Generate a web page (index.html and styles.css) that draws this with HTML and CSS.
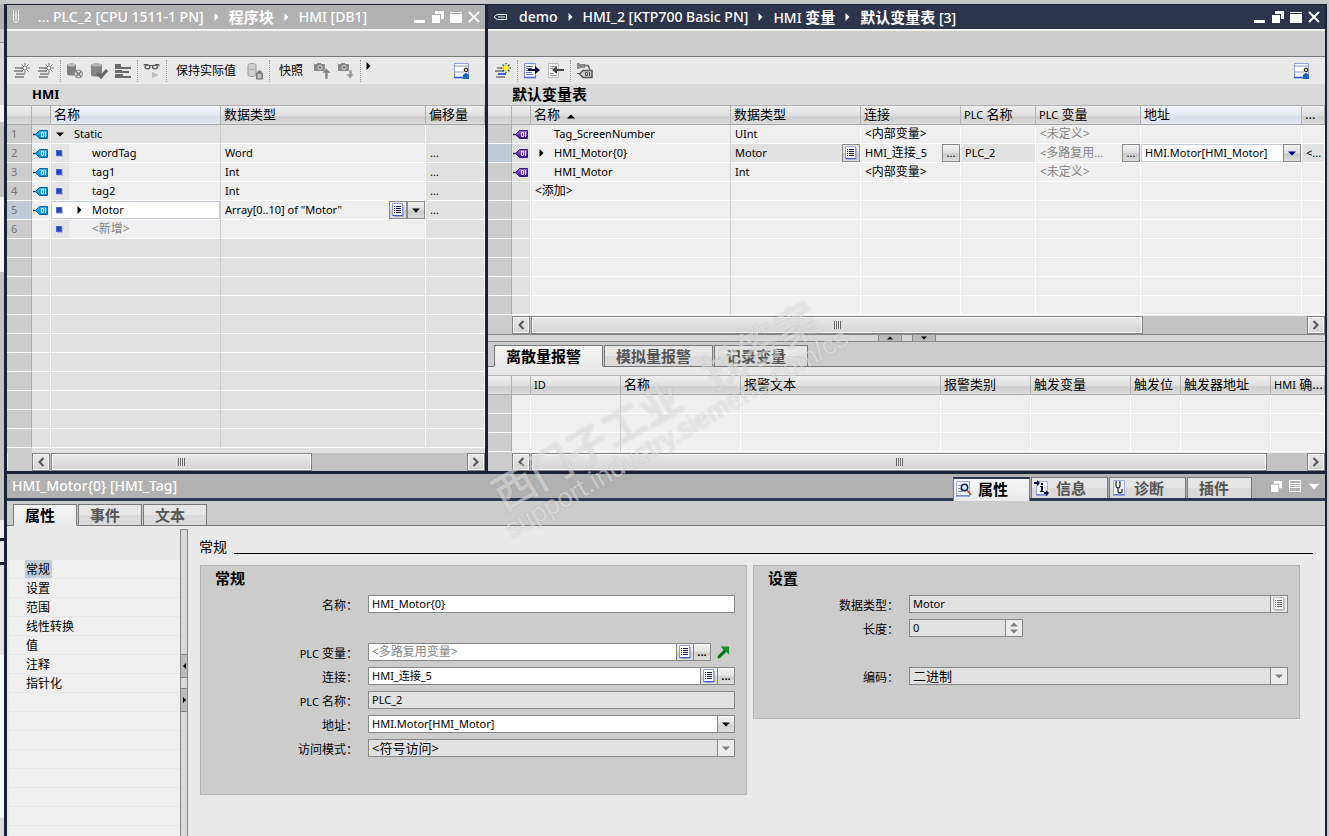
FILE: index.html
```html
<!DOCTYPE html>
<html lang="zh-CN">
<head>
    <meta charset="UTF-8">
    <meta name="viewport" content="width=device-width, initial-scale=1.0">
    <title>HMI_Motor{0} [HMI_Tag]</title>
    <link rel="stylesheet" href="styles.css">
</head>
<body>
    <!-- Icon library -->
    <svg class="icon-defs" aria-hidden="true">
        <linearGradient id="tagBlue" x1="0" y1="0" x2="0" y2="1"><stop offset="0" stop-color="#2bb4ff"/><stop offset="1" stop-color="#008ce0"/></linearGradient>
        <linearGradient id="tagViolet" x1="0" y1="0" x2="0" y2="1"><stop offset="0" stop-color="#9a68e6"/><stop offset="1" stop-color="#3b0a9a"/></linearGradient>
        <symbol id="tag-blue" viewBox="0 0 16 11">
            <path d="M0 5.5h3" stroke="#123" stroke-width="1.4"/>
            <path d="M2.500 5.500L6.500 1.500H14.500v8H6.500z" fill="url(#tagBlue)" stroke="#0a5f9e"/>
            <path d="M8.500 3.500h2v4h-2zM12.500 3v5" fill="none" stroke="#fff"/>
        </symbol>
        <symbol id="tag-violet" viewBox="0 0 16 11">
            <path d="M0 5.5h3" stroke="#123" stroke-width="1.4"/>
            <path d="M2.500 5.500L6.500 1.500H14.500v8H6.500z" fill="url(#tagViolet)" stroke="#3a1488"/>
            <path d="M8.500 3.500h2v4h-2zM12.500 3v5" fill="none" stroke="#fff"/>
        </symbol>
        <symbol id="list" viewBox="0 0 12 14">
            <path d="M2 2h10v12H2z" fill="#a9b1cf"/>
            <path d="M.5.5h10v12H.5z" fill="#fff" stroke="#8c9ce0"/>
            <path d="M.5 12.500h10" stroke="#3b5bd0"/>
            <path d="M2 3.500h1m1 0h5M2 5.500h1m1 0h5M2 7.500h1m1 0h5M2 9.500h1m1 0h5" stroke="#101050"/>
        </symbol>
        <symbol id="list-gray" viewBox="0 0 12 14">
            <path d="M2 2h10v12H2z" fill="#bfc4cf"/>
            <path d="M.5.5h10v12H.5z" fill="#f2f2f2" stroke="#bbb"/>
            <path d="M2 3.500h1m1 0h5M2 5.500h1m1 0h5M2 7.500h1m1 0h5M2 9.500h1m1 0h5" stroke="#666"/>
        </symbol>
        <symbol id="down" viewBox="0 0 8 5"><path d="M0 .5h8L4 4.500z" fill="currentColor"/></symbol>
        <symbol id="up" viewBox="0 0 8 5"><path d="M0 4.500h8L4 .5z" fill="currentColor"/></symbol>
        <symbol id="right" viewBox="0 0 5 8"><path d="M.5 0v8l4-4z" fill="currentColor"/></symbol>
        <symbol id="left" viewBox="0 0 5 8"><path d="M4.500 0v8l-4-4z" fill="currentColor"/></symbol>
        <symbol id="chev-left" viewBox="0 0 8 10"><path d="M6.500 1L2.500 5l4 4" fill="none" stroke="#555" stroke-width="2"/></symbol>
        <symbol id="chev-right" viewBox="0 0 8 10"><path d="M1.500 1l4 4-4 4" fill="none" stroke="#555" stroke-width="2"/></symbol>
        <symbol id="win-min" viewBox="0 0 12 12"><path d="M0 9h11v3H0z" fill="#fff"/></symbol>
        <symbol id="win-restore" viewBox="0 0 12 12"><path d="M0 4h8v8H0zM3 0h9v8H9V3H3z" fill="#fff"/></symbol>
        <symbol id="win-max" viewBox="0 0 12 12"><path d="M0 1h12v1H0zM0 3h12v9H0z" fill="#fff"/></symbol>
        <symbol id="win-close" viewBox="0 0 12 12"><path d="M1 1l10 10M11 1L1 11" stroke="#fff" stroke-width="2"/></symbol>
        <symbol id="new-row" viewBox="0 0 18 18">
            <path d="M2 5h8v2H2zM1 8h9v2H1zM3 11h9v2H3zM2 14h9v2H2z" fill="#999"/>
            <path d="M12 1v10M7 6h10M8.500 2.500l7 7M15.500 2.500l-7 7" stroke="#777"/>
            <path d="M11 5h2v2h-2z" fill="#fff"/>
        </symbol>
        <symbol id="new-row-color" viewBox="0 0 18 18">
            <path d="M3 5h7v2H3zM1 8h9v2H1zM2 14h9v2H2z" fill="#909090"/>
            <path d="M4 11h8v2H4z" fill="#3d62e8"/>
            <path d="M12 1v10M7 6h10M8.500 2.500l7 7M15.500 2.500l-7 7" stroke="#2d5f6e" stroke-width="1.300"/>
            <path d="M12 2v8M8 6h8M10 4l4 4M14 4l-4 4" stroke="#ffef3a" stroke-width="1.500"/>
        </symbol>
        <symbol id="cylinder-gear" viewBox="0 0 18 18">
            <path d="M1 3c0-2 9-2 9 0v9c0 2-9 2-9 0z" fill="#808080"/>
            <ellipse cx="5.500" cy="3" rx="4" ry="1.500" fill="#bcbcbc"/>
            <circle cx="12.500" cy="12" r="4" fill="#ddd" stroke="#888"/>
            <path d="M10 9.500l5 5M15 9.500l-5 5" stroke="#777" stroke-width="1.500"/>
        </symbol>
        <symbol id="cylinder-check" viewBox="0 0 18 18">
            <path d="M1 3c0-2 11-2 11 0v10c0 2-11 2-11 0z" fill="#858585"/>
            <ellipse cx="6.500" cy="3" rx="5" ry="1.500" fill="#b8b8b8"/>
            <path d="M7 11l4 4 6-7" fill="none" stroke="#666" stroke-width="3"/>
        </symbol>
        <symbol id="cylinder-lock" viewBox="0 0 18 18">
            <path d="M2 3c0-2 8-2 8 0v10c0 2-8 2-8 0z" fill="#cfcfcf" stroke="#999"/>
            <path d="M2 6c0 2 8 2 8 0" fill="none" stroke="#aaa"/>
            <path d="M10.500 11h6v6h-6zM12 11V9h3v2" fill="#999" stroke="#777"/>
            <path d="M12 13h3M12 15h3" stroke="#eee"/>
        </symbol>
        <symbol id="rows" viewBox="0 0 18 18">
            <path d="M1 2h6v3h10v2H1zM1 8h7v1h7v2H1zM1 12h8v2h8v2H1z" fill="#6c6c6c"/>
        </symbol>
        <symbol id="glasses" viewBox="0 0 18 18">
            <path d="M1 3.500V2.500h4M12 2.500h4v2M7 3.500h3" fill="none" stroke="#555"/>
            <ellipse cx="4.500" cy="5" rx="2.500" ry="1.800" fill="none" stroke="#555" stroke-width="1.300"/>
            <ellipse cx="12" cy="5" rx="2.500" ry="1.800" fill="none" stroke="#555" stroke-width="1.300"/>
            <path d="M9 10v6l7-3z" fill="#bbb"/>
        </symbol>
        <symbol id="camera-up" viewBox="0 0 18 18">
            <path d="M1 2h3V1h4v1h4v7H1z" fill="#8a8a8a"/><circle cx="7" cy="5.500" r="2" fill="#777" stroke="#ddd"/>
            <path d="M13 6l5 5h-3v6h-3v-6H9z" fill="#888" stroke="#e9e9e9" stroke-width=".5"/>
        </symbol>
        <symbol id="camera-down" viewBox="0 0 18 18">
            <path d="M1 2h3V1h4v1h4v7H1z" fill="#8a8a8a"/><circle cx="7" cy="5.500" r="2" fill="#777" stroke="#ddd"/>
            <path d="M13 17l4-5h-2V8h-3v4H9z" fill="#999" stroke="#e9e9e9" stroke-width=".5"/>
        </symbol>
        <symbol id="sheet-user" viewBox="0 0 18 18">
            <path d="M1.500 1.500h14v14h-14z" fill="#fff" stroke="#94a2dc"/>
            <path d="M1 4h15M1 10h10" stroke="#8d9bb8"/>
            <path d="M1 15.500h12" stroke="#2b50e0" stroke-width="1.500"/>
            <circle cx="13" cy="8" r="1.800" fill="#f0c69a" stroke="#111"/>
            <path d="M10 17v-4q3-4 6 0v4z" fill="#1d66b5"/>
        </symbol>
        <symbol id="export" viewBox="0 0 18 18">
            <path d="M1.500 1.500h11v14h-11z" fill="#fff" stroke="#7a8ce0"/>
            <path d="M1 15.500h12" stroke="#4262d8" stroke-width="1.500"/>
            <path d="M3 4.500h7M3 6.500h6M3 8.500h2M3 10.500h6M3 12.500h7" stroke="#6274b4"/>
            <path d="M5 7h7V4l5 4-5 4V9H5z" fill="#060640"/>
        </symbol>
        <symbol id="import" viewBox="0 0 18 18">
            <path d="M1.500 1.500h10v14h-10z" fill="#f6f6f6" stroke="#bbb"/>
            <path d="M3 4.500h7M3 6.500h3M3 11.500h4M3 13.500h7" stroke="#999"/>
            <path d="M17 7h-7V4L5 8l5 4V9h7z" fill="#444"/>
        </symbol>
        <symbol id="plug" viewBox="0 0 18 18">
            <path d="M1 1h2l1 1h5v4H4L3 7H1z" fill="#8a8a8a"/>
            <path d="M8 3.500h4l2 4" fill="none" stroke="#666" stroke-width="1.500"/>
            <path d="M1 11.500h3" stroke="#555"/>
            <path d="M3.500 12L7 8.500h9v7H7z" fill="#ccc" stroke="#555" stroke-width="1.500"/>
            <path d="M9.500 10.500h2v3h-2zM13.500 10v4" fill="none" stroke="#555"/>
        </symbol>
        <symbol id="goto" viewBox="0 0 14 14">
            <path d="M4 1h9v9l-3-3-7 7H1v-3l6-6z" fill="#17932c"/>
            <path d="M1 13l8-8" stroke="#0b5c1a" stroke-width="2"/>
        </symbol>
        <symbol id="search-sheet" viewBox="0 0 16 16">
            <path d="M.5.5h13v14H.5z" fill="#f7f9ff" stroke="#a0aee8"/><path d="M0 15h14" stroke="#4a68dc"/>
            <path d="M2 4.500h4M2 7.500h3M2 10.500h5" stroke="#99a"/>
            <circle cx="8.500" cy="6.500" r="3.200" fill="#dce8fb" stroke="#102050" stroke-width="1.500"/><path d="M11 9l4 5" stroke="#98673b" stroke-width="2"/>
        </symbol>
        <symbol id="info-sheet" viewBox="0 0 16 16">
            <path d="M2.500 1.500h11v13h-11z" fill="#eef2ff" stroke="#a0aee8"/><path d="M2 15h12" stroke="#4a68dc"/>
            <path d="M0 2h3V0l3 3-3 3V4H0zM10 12h2v-2l3 3-3 3v-2h-2z" fill="#060640"/>
            <path d="M7 3h2v2H7zM6 6h3v5h1v1H6v-1h1V7H6z" fill="#060640"/>
        </symbol>
        <symbol id="diag-sheet" viewBox="0 0 16 16">
            <path d="M1.500.5h11v14h-11z" fill="#eef2ff" stroke="#a0aee8"/><path d="M1 15h12" stroke="#4a68dc"/>
            <path d="M5 2H4v3q0 3 2 3t2-3V2H7M6 8v3q0 2 2 2t2-2V9" fill="none" stroke="#333" stroke-width="1.300"/>
        </symbol>
    </svg>

    <div class="app">
        <div class="edge-top"></div>
        <div class="workspace">
            <!-- PLC data block editor -->
            <section class="window">
                <header class="titlebar">
                    <svg class="pin" width="8" height="14" viewBox="0 0 8 14"><path d="M1.500 0v10l2.500 3 2.500-3V0M4 1v9" fill="none" stroke="#fff"/></svg>
                    <div class="crumbs">
                        <span>... PLC_2 [CPU 1511-1 PN]</span><svg width="5" height="8"><use href="#right"/></svg><span class="zh">程序块</span><svg width="5" height="8"><use href="#right"/></svg><span>HMI [DB1]</span>
                    </div>
                    <div class="window-buttons">
                        <button aria-label="最小化"><svg width="12" height="12"><use href="#win-min"/></svg></button>
                        <button aria-label="浮动"><svg width="12" height="12"><use href="#win-restore"/></svg></button>
                        <button aria-label="最大化"><svg width="12" height="12"><use href="#win-max"/></svg></button>
                        <button aria-label="关闭"><svg width="12" height="12"><use href="#win-close"/></svg></button>
                    </div>
                </header>
                <div class="substrip"></div>
                <div class="toolbar">
                    <button aria-label="插入行"><svg width="18" height="18"><use href="#new-row"/></svg></button>
                    <button aria-label="添加行"><svg width="18" height="18"><use href="#new-row"/></svg></button>
                    <span class="sep"></span>
                    <button aria-label="复位启动值"><svg width="18" height="18"><use href="#cylinder-gear"/></svg></button>
                    <button aria-label="更新接口"><svg width="18" height="18"><use href="#cylinder-check"/></svg></button>
                    <button aria-label="扩展模式"><svg width="18" height="18"><use href="#rows"/></svg></button>
                    <span class="sep"></span>
                    <button aria-label="全部监视"><svg width="18" height="18"><use href="#glasses"/></svg></button>
                    <span class="sep"></span>
                    <button class="text-button">保持实际值</button>
                    <button aria-label="锁定"><svg width="18" height="18"><use href="#cylinder-lock"/></svg></button>
                    <span class="sep"></span>
                    <button class="text-button">快照</button>
                    <button aria-label="上传快照"><svg width="18" height="18"><use href="#camera-up"/></svg></button>
                    <button aria-label="下载快照"><svg width="18" height="18"><use href="#camera-down"/></svg></button>
                    <span class="sep"></span>
                    <button class="more" aria-label="更多"><svg width="5" height="8"><use href="#right"/></svg></button>
                    <button class="last" aria-label="保存窗口设置"><svg width="18" height="18"><use href="#sheet-user"/></svg></button>
                </div>
                <h2 class="table-title">HMI</h2>
                <div class="grid-wrap grid-dark">
                    <table class="grid">
                        <colgroup><col class="c-num-l"><col class="c-icon"><col class="w170"><col class="w205"><col></colgroup>
                        <thead>
                            <tr><th></th><th></th><th class="sorted">名称</th><th>数据类型</th><th>偏移量</th></tr>
                        </thead>
                        <tbody>
                            <tr class="group"><td>1</td><td><svg width="16" height="11"><use href="#tag-blue"/></svg></td><td><div class="cell"><span class="slot"><svg width="8" height="5"><use href="#down"/></svg></span>Static</div></td><td></td><td></td></tr>
                            <tr><td>2</td><td><svg width="16" height="11"><use href="#tag-blue"/></svg></td><td><div class="cell"><span class="slot tint"><i class="bullet"></i></span><span class="slot"></span>wordTag</div></td><td>Word</td><td>...</td></tr>
                            <tr><td>3</td><td><svg width="16" height="11"><use href="#tag-blue"/></svg></td><td><div class="cell"><span class="slot tint"><i class="bullet"></i></span><span class="slot"></span>tag1</div></td><td>Int</td><td>...</td></tr>
                            <tr><td>4</td><td><svg width="16" height="11"><use href="#tag-blue"/></svg></td><td><div class="cell"><span class="slot tint"><i class="bullet"></i></span><span class="slot"></span>tag2</div></td><td>Int</td><td>...</td></tr>
                            <tr><td class="current">5</td><td><svg width="16" height="11"><use href="#tag-blue"/></svg></td><td class="selected"><div class="cell"><span class="slot"><i class="bullet"></i></span><span class="slot"><svg width="5" height="8"><use href="#right"/></svg></span>Motor</div></td><td><div class="cell"><span class="value">Array[0..10] of "Motor"</span><button class="mini" aria-label="选择类型"><svg width="12" height="14"><use href="#list"/></svg></button><button class="mini" aria-label="展开"><svg width="8" height="5"><use href="#down"/></svg></button></div></td><td>...</td></tr>
                            <tr><td>6</td><td></td><td><div class="cell"><span class="slot tint"><i class="bullet"></i></span><span class="slot"></span><span class="zh hint">&lt;新增&gt;</span></div></td><td></td><td></td></tr>
                            <tr class="group"><td></td><td></td><td></td><td></td><td></td></tr>
                            <tr class="group"><td></td><td></td><td></td><td></td><td></td></tr>
                            <tr class="group"><td></td><td></td><td></td><td></td><td></td></tr>
                            <tr class="group"><td></td><td></td><td></td><td></td><td></td></tr>
                            <tr class="group"><td></td><td></td><td></td><td></td><td></td></tr>
                            <tr class="group"><td></td><td></td><td></td><td></td><td></td></tr>
                            <tr class="group"><td></td><td></td><td></td><td></td><td></td></tr>
                            <tr class="group"><td></td><td></td><td></td><td></td><td></td></tr>
                            <tr class="group"><td></td><td></td><td></td><td></td><td></td></tr>
                            <tr class="group"><td></td><td></td><td></td><td></td><td></td></tr>
                            <tr class="group"><td></td><td></td><td></td><td></td><td></td></tr>
                        </tbody>
                    </table>
                </div>
                <div class="scrollbar">
                    <button aria-label="向左"><svg width="8" height="10"><use href="#chev-left"/></svg></button>
                    <div class="track"><div class="thumb thumb-left"><i class="grip"></i></div></div>
                    <button aria-label="向右"><svg width="8" height="10"><use href="#chev-right"/></svg></button>
                </div>
            </section>

            <!-- HMI tag table -->
            <section class="window active">
                <header class="titlebar">
                    <svg class="pin" width="14" height="8" viewBox="0 0 14 8"><path d="M13.500 1.500H4L1 4l3 2.500h9.500v-5M12 4H5" fill="none" stroke="#fff"/></svg>
                    <div class="crumbs">
                        <span>demo</span><svg width="5" height="8"><use href="#right"/></svg><span>HMI_2 [KTP700 Basic PN]</span><svg width="5" height="8"><use href="#right"/></svg><span>HMI <b class="zh">变量</b></span><svg width="5" height="8"><use href="#right"/></svg><span><b class="zh">默认变量表</b> [3]</span>
                    </div>
                    <div class="window-buttons">
                        <button aria-label="最小化"><svg width="12" height="12"><use href="#win-min"/></svg></button>
                        <button aria-label="浮动"><svg width="12" height="12"><use href="#win-restore"/></svg></button>
                        <button aria-label="最大化"><svg width="12" height="12"><use href="#win-max"/></svg></button>
                        <button aria-label="关闭"><svg width="12" height="12"><use href="#win-close"/></svg></button>
                    </div>
                </header>
                <div class="substrip"></div>
                <div class="toolbar">
                    <button aria-label="添加变量"><svg width="18" height="18"><use href="#new-row-color"/></svg></button>
                    <span class="sep"></span>
                    <button aria-label="导出"><svg width="18" height="18"><use href="#export"/></svg></button>
                    <button aria-label="导入"><svg width="18" height="18"><use href="#import"/></svg></button>
                    <span class="sep"></span>
                    <button aria-label="重新连接"><svg width="18" height="18"><use href="#plug"/></svg></button>
                    <button class="last" aria-label="保存窗口设置"><svg width="18" height="18"><use href="#sheet-user"/></svg></button>
                </div>
                <h2 class="table-title zh">默认变量表</h2>
                <div class="grid-wrap">
                    <table class="grid tags">
                        <colgroup><col class="c-num"><col class="c-icon"><col class="w200"><col class="w130"><col class="w100"><col class="w75"><col class="w105"><col class="w161"><col></colgroup>
                        <thead>
                            <tr><th></th><th></th><th>名称 <svg class="sort" width="8" height="5"><use href="#up"/></svg></th><th>数据类型</th><th>连接</th><th><small>PLC</small> 名称</th><th><small>PLC</small> 变量</th><th class="sorted">地址</th><th>...</th></tr>
                        </thead>
                        <tbody>
                            <tr><td></td><td><svg width="16" height="11"><use href="#tag-violet"/></svg></td><td><div class="cell"><span class="slot"></span>Tag_ScreenNumber</div></td><td>UInt</td><td class="zh">&lt;内部变量&gt;</td><td></td><td class="zh hint">&lt;未定义&gt;</td><td></td><td></td></tr>
                            <tr><td class="current"></td><td><svg width="16" height="11"><use href="#tag-violet"/></svg></td><td><div class="cell"><span class="slot"><svg width="5" height="8"><use href="#right"/></svg></span>HMI_Motor{0}</div></td>
                                <td class="readonly"><div class="cell"><span class="value">Motor</span><button class="mini" aria-label="选择类型"><svg width="12" height="14"><use href="#list"/></svg></button></div></td>
                                <td><div class="cell"><span class="value">HMI_<span class="zh">连接</span>_5</span><button class="mini" aria-label="浏览连接">...</button></div></td>
                                <td class="readonly">PLC_2</td>
                                <td><div class="cell"><span class="value hint">&lt;<span class="zh">多路复用</span>...</span><button class="mini" aria-label="浏览变量">...</button></div></td>
                                <td class="selected"><div class="cell"><input type="text" aria-label="地址" value="HMI.Motor[HMI_Motor]"><button class="mini blue" aria-label="展开"><svg width="8" height="5"><use href="#down"/></svg></button></div></td>
                                <td class="readonly">&lt;...</td></tr>
                            <tr><td></td><td><svg width="16" height="11"><use href="#tag-violet"/></svg></td><td><div class="cell"><span class="slot"></span>HMI_Motor</div></td><td>Int</td><td class="zh">&lt;内部变量&gt;</td><td></td><td class="zh hint">&lt;未定义&gt;</td><td></td><td></td></tr>
                            <tr><td></td><td></td><td class="zh">&lt;添加&gt;</td><td></td><td></td><td></td><td></td><td></td><td></td></tr>
                            <tr><td></td><td></td><td></td><td></td><td></td><td></td><td></td><td></td><td></td></tr>
                            <tr><td></td><td></td><td></td><td></td><td></td><td></td><td></td><td></td><td></td></tr>
                            <tr><td></td><td></td><td></td><td></td><td></td><td></td><td></td><td></td><td></td></tr>
                            <tr><td></td><td></td><td></td><td></td><td></td><td></td><td></td><td></td><td></td></tr>
                            <tr><td></td><td></td><td></td><td></td><td></td><td></td><td></td><td></td><td></td></tr>
                            <tr><td></td><td></td><td></td><td></td><td></td><td></td><td></td><td></td><td></td></tr>
                        </tbody>
                    </table>
                </div>
                <div class="scrollbar">
                    <button aria-label="向左"><svg width="8" height="10"><use href="#chev-left"/></svg></button>
                    <div class="track"><div class="thumb thumb-tags"><i class="grip"></i></div></div>
                    <button aria-label="向右"><svg width="8" height="10"><use href="#chev-right"/></svg></button>
                </div>
                <div class="splitter-h">
                    <button aria-label="向上"><svg width="6" height="4"><use href="#up"/></svg></button>
                    <button aria-label="向下"><svg width="6" height="4"><use href="#down"/></svg></button>
                </div>
                <nav class="tabs">
                    <button class="tab on">离散量报警</button>
                    <button class="tab">模拟量报警</button>
                    <button class="tab">记录变量</button>
                </nav>
                <div class="grid-wrap alarms">
                    <table class="grid">
                        <colgroup><col class="c-num"><col class="c-icon"><col class="w90"><col class="w120"><col class="w200"><col class="w90"><col class="w100"><col class="w50"><col class="w90"><col></colgroup>
                        <thead>
                            <tr><th></th><th></th><th><small>ID</small></th><th>名称</th><th>报警文本</th><th>报警类别</th><th>触发变量</th><th>触发位</th><th>触发器地址</th><th><small>HMI</small> 确...</th></tr>
                        </thead>
                        <tbody>
                            <tr><td></td><td></td><td></td><td></td><td></td><td></td><td></td><td></td><td></td><td></td></tr>
                            <tr><td></td><td></td><td></td><td></td><td></td><td></td><td></td><td></td><td></td><td></td></tr>
                            <tr><td></td><td></td><td></td><td></td><td></td><td></td><td></td><td></td><td></td><td></td></tr>
                        </tbody>
                    </table>
                </div>
                <div class="scrollbar">
                    <button aria-label="向左"><svg width="8" height="10"><use href="#chev-left"/></svg></button>
                    <div class="track"><div class="thumb thumb-alarms"><i class="grip"></i></div></div>
                    <button aria-label="向右"><svg width="8" height="10"><use href="#chev-right"/></svg></button>
                </div>
            </section>
        </div>

        <!-- Inspector -->
        <section class="inspector">
            <header class="inspector-bar">
                <h1>HMI_Motor{0} [HMI_Tag]</h1>
                <button class="tab on"><svg width="16" height="16"><use href="#search-sheet"/></svg>属性</button>
                <button class="tab"><svg width="16" height="16"><use href="#info-sheet"/></svg>信息</button>
                <button class="tab"><svg width="16" height="16"><use href="#diag-sheet"/></svg>诊断</button>
                <button class="tab">插件</button>
                <div class="window-buttons">
                    <button aria-label="浮动"><svg width="11" height="11"><use href="#win-restore"/></svg></button>
                    <button aria-label="布局"><svg width="12" height="12" viewBox="0 0 12 12"><path d="M.5.500h11v11H.5zM0 3.500h12M0 5.500h12M0 7.500h12" fill="none" stroke="#fff"/></svg></button>
                    <button aria-label="折叠"><svg width="12" height="7"><use href="#down"/></svg></button>
                </div>
            </header>
            <nav class="tabs inspector-tabs">
                <button class="tab on">属性</button>
                <button class="tab">事件</button>
                <button class="tab">文本</button>
            </nav>
            <div class="inspector-body">
                <ul class="nav">
                    <li><a class="on" href="#general">常规</a></li>
                    <li><a href="#settings">设置</a></li>
                    <li><a href="#range">范围</a></li>
                    <li><a href="#scaling">线性转换</a></li>
                    <li><a href="#values">值</a></li>
                    <li><a href="#comment">注释</a></li>
                    <li><a href="#multiplex">指针化</a></li>
                </ul>
                <div class="splitter-v">
                    <button aria-label="向左"><svg width="5" height="6"><use href="#left"/></svg></button>
                    <button aria-label="向右"><svg width="5" height="6"><use href="#right"/></svg></button>
                </div>
                <div class="content" id="general">
                    <h2 class="section-title">常规</h2>
                    <div class="cards">
                        <form class="card">
                            <h3>常规</h3>
                            <div class="row space"><label for="name">名称<i>：</i></label><div class="field"><input id="name" type="text" value="HMI_Motor{0}"></div></div>
                            <div class="row"><label for="plcTag"><small>PLC</small> 变量<i>：</i></label><div class="field"><input id="plcTag" class="zh hint" type="text" value="&lt;多路复用变量&gt;"><button type="button" aria-label="选择"><svg width="12" height="14"><use href="#list"/></svg></button><button type="button" aria-label="浏览">...</button></div><a class="goto" href="#name" aria-label="转到"><svg width="13" height="14"><use href="#goto"/></svg></a></div>
                            <div class="row"><label for="connection">连接<i>：</i></label><div class="field"><input id="connection" type="text" value="HMI_连接_5"><button type="button" aria-label="选择"><svg width="12" height="14"><use href="#list"/></svg></button><button type="button" aria-label="浏览">...</button></div></div>
                            <div class="row"><label for="plcName"><small>PLC</small> 名称<i>：</i></label><div class="field off"><input id="plcName" type="text" value="PLC_2" readonly></div></div>
                            <div class="row"><label for="address">地址<i>：</i></label><div class="field"><input id="address" type="text" value="HMI.Motor[HMI_Motor]"><button type="button" aria-label="展开"><svg width="8" height="5"><use href="#down"/></svg></button></div></div>
                            <div class="row"><label for="access">访问模式<i>：</i></label><div class="field off"><select id="access" disabled><option>&lt;符号访问&gt;</option></select><span class="drop"><svg width="8" height="5"><use href="#down"/></svg></span></div></div>
                        </form>
                        <form class="card settings" id="settings">
                            <h3>设置</h3>
                            <div class="row"><label for="dataType">数据类型<i>：</i></label><div class="field off"><input id="dataType" type="text" value="Motor" readonly><span class="drop"><svg width="12" height="14"><use href="#list-gray"/></svg></span></div></div>
                            <div class="row space"><label for="length">长度<i>：</i></label><div class="field off short"><input id="length" type="text" value="0" readonly><span class="spin"><svg width="8" height="5"><use href="#up"/></svg><svg width="8" height="5"><use href="#down"/></svg></span></div></div>
                            <div class="row"><label for="coding">编码<i>：</i></label><div class="field off"><select id="coding" disabled><option>二进制</option></select><span class="drop"><svg width="8" height="5"><use href="#down"/></svg></span></div></div>
                        </form>
                    </div>
                </div>
            </div>
        </section>

        <div class="watermark" aria-hidden="true">
            <div class="mark-name"><span>西门子工业</span><span>找答案</span></div>
            <div class="mark-url">support.industry.siemens.com/cs</div>
        </div>
    </div>
</body>
</html>
```
FILE: styles.css
```css
* {
    box-sizing: border-box;
}

body {
    margin: 0;
    background: #c8c8c8;
    color: #000;
    font-family: "Noto Sans", "Noto Sans CJK SC", sans-serif;
    font-size: 11px;
    line-height: 18px;
}

button, input, select {
    margin: 0;
    padding: 0;
    border: 0;
    border-radius: 0;
    background: none;
    color: inherit;
    font: inherit;
}

button {
    cursor: pointer;
}

h1, h2, h3 {
    margin: 0;
}

svg {
    display: block;
    flex: none;
}

.icon-defs {
    position: absolute;
    width: 0;
    height: 0;
}

.zh {
    font-size: 12px;
}

.hint {
    color: #858585;
}

/* Frame, with the edge of the project tree showing on the left */
.app {
    position: relative;
    display: flex;
    flex-direction: column;
    min-height: 100vh;
    overflow: hidden;
    padding: 0 2px 0 4px;
    background: linear-gradient(#b1b1b1 29px, #ccc 29px 42px, #999 42px 43px, #d9d9d9 43px 105px, #f4f4f4 105px 122px, #c3c3c3 122px 197px, #f4f4f4 197px 272px, #c3c3c3 272px 520px, #f0f0f0 520px 538px, #1b2233 538px 541px, #e9e9e9 541px 562px, #1b2233 562px 565px, #e4e4e4 565px 655px, #f7f8fb 655px 818px, #ddd 818px) no-repeat 0 0 / 4px 100%;
}

.edge-top {
    height: 4px;
    margin-left: -4px;
    background: #c8c8c8;
}

.workspace {
    display: grid;
    grid-template-columns: minmax(0, 478fr) minmax(0, 837fr);
    gap: 3px;
    padding: 1px 2px 3px 3px;
    background: #1b2233;
}

.window {
    display: flex;
    flex-direction: column;
    background: #e9e9e9;
}

/* Title bars */
.titlebar {
    display: flex;
    align-items: center;
    height: 24px;
    padding: 0 2px 0 4px;
    background: #b1b1b1;
    color: #fff;
    font-size: 14px;
    font-weight: 500;
}

.active .titlebar {
    background: #2d344c;
}

.pin {
    margin: 0 4px 0 1px;
}

.titlebar .crumbs {
    display: flex;
    flex: 1;
    align-items: center;
    gap: 10px;
    min-width: 0;
    padding-left: 14px;
    white-space: nowrap;
}

.active .crumbs {
    padding-left: 8px;
}

.crumbs .zh {
    font-size: 15px;
    font-weight: 700;
}

.window-buttons {
    display: flex;
}

.window-buttons button {
    display: flex;
    align-items: center;
    justify-content: center;
    width: 18px;
    height: 18px;
}

.substrip {
    height: 28px;
    border-top: 2px solid #f3f3f6;
    border-bottom: 1px solid #777;
    background: #ccc;
}

.toolbar {
    display: flex;
    align-items: center;
    height: 27px;
    padding: 0 0 0 3px;
}

.toolbar button {
    display: flex;
    align-items: center;
    justify-content: center;
    width: 24px;
    height: 24px;
}

.toolbar .text-button {
    width: auto;
    padding: 0 7px;
    font-size: 12px;
    white-space: nowrap;
}

.toolbar .more {
    width: 10px;
    padding-bottom: 10px;
}

.toolbar .last {
    margin: 0 11px 0 auto;
}

.sep {
    height: 22px;
    margin: 0 2px;
    border-left: 1px dotted #999;
}

.table-title {
    height: 21px;
    padding-left: 25px;
    background: #d9d9d9;
    font-size: 13px;
    line-height: 20px;
}

.table-title.zh {
    padding-left: 24px;
    font-size: 15px;
}

/* Tables */
.grid-wrap {
    flex: 1 0 211px;
    overflow: hidden;
    background: linear-gradient(to right, #ccc 24px, #efefef 24px);
}

.grid-dark {
    background: linear-gradient(to right, #ccc 25px, #e1e1e1 25px);
}

.alarms {
    flex-basis: 78px;
}

.grid {
    width: 100%;
    table-layout: fixed;
    border-collapse: separate;
    border-spacing: 0;
}

.c-num-l { width: 25px; }
.c-num { width: 24px; }
.c-icon { width: 19px; }
.w50 { width: 50px; }
.w75 { width: 75px; }
.w90 { width: 90px; }
.w100 { width: 100px; }
.w105 { width: 105px; }
.w120 { width: 120px; }
.w130 { width: 130px; }
.w161 { width: 161px; }
.w170 { width: 170px; }
.w200 { width: 200px; }
.w205 { width: 205px; }

.grid th {
    height: 20px;
    padding: 0 0 0 3px;
    overflow: hidden;
    border-top: 1px solid #b0b0b0;
    border-right: 1px solid #b0b0b0;
    border-bottom: 1px solid #a8a8a8;
    background: linear-gradient(#efefef, #dedede 55%, #cdcdcd 60%, #dcdcdc);
    font-size: 13px;
    font-weight: 400;
    line-height: 16px;
    text-align: left;
    vertical-align: top;
    white-space: nowrap;
}

.grid th.sorted {
    background: linear-gradient(#f2f5f9, #e3e8f0 55%, #d5dce7 60%, #e4e9f0);
}

small {
    font-size: 11px;
}

.sort {
    display: inline-block;
    margin-left: 4px;
}

.grid td {
    height: 19px;
    padding: 0 0 0 4px;
    overflow: hidden;
    border-right: 1px solid #fff;
    border-bottom: 1px solid #fff;
    background: #efefef;
    line-height: 18px;
    white-space: nowrap;
}

.grid td:first-child {
    border-right-color: #aaa;
    background: #ccc;
    color: #777;
}

.grid td:nth-child(2) {
    padding: 0 0 0 1px;
}

.grid td:nth-child(3) {
    border-right-color: #ccc;
}

.grid-dark .group td,
.grid-dark td:nth-child(5),
.tags td:nth-child(2),
.grid td.readonly {
    background: #e1e1e1;
}

.grid-dark .group td:first-child {
    background: #ccc;
}

.grid td.current {
    background: #bfcad6;
}

.grid td.selected {
    padding-right: 0;
    background: #fff;
    box-shadow: inset 0 0 0 1px #bfcad6;
}

.cell {
    display: flex;
    align-items: center;
    height: 18px;
}

.value, .cell input {
    flex: 1;
    min-width: 0;
}

.slot {
    display: flex;
    align-items: center;
    flex: none;
    width: 19px;
    height: 18px;
    padding-left: 1px;
}

.tint {
    width: 18px;
    margin: 0 4px 0 -4px;
    padding-left: 5px;
    background: #e4e4e4;
}

.selected .slot {
    width: 18px;
}

.selected .slot + .slot {
    width: 19px;
    padding-left: 4px;
}

.bullet {
    width: 6px;
    height: 6px;
    border: 1px solid #4667d8;
    background: #2445b5;
    box-shadow: 1px 1px #b7bfdc;
}

.tags .slot {
    padding-left: 4px;
}

.mini {
    display: flex;
    align-items: center;
    justify-content: center;
    flex: none;
    width: 18px;
    height: 18px;
    border: 1px solid #8a8a8a;
    background: linear-gradient(#f2f2f2, #ddd 50%, #c9c9c9 55%, #ddd);
}

.blue {
    color: #00008b;
}

/* Scrollbars */
.scrollbar {
    display: flex;
    height: 18px;
    margin-left: 24px;
    background: #c3c3c3;
    box-shadow: -24px 0 #ccc;
}

.grid-dark + .scrollbar {
    margin-left: 25px;
}

.scrollbar button, .thumb {
    display: flex;
    align-items: center;
    justify-content: center;
    border: 1px solid #858585;
    background: linear-gradient(#e8e8e8, #d5d5d5);
    box-shadow: inset 0 0 0 1px #f8f8f8;
}

.scrollbar button {
    width: 18px;
}

.track {
    flex: 1;
    padding: 0 1px;
}

.thumb {
    height: 18px;
}

.thumb-left { width: 63%; }
.thumb-tags { width: 79%; }
.thumb-alarms { width: 95%; }

.grip {
    width: 7px;
    height: 8px;
    background: repeating-linear-gradient(to right, #666 0 1px, #eee 1px 2px);
}

.splitter-h {
    display: flex;
    justify-content: center;
    gap: 10px;
    height: 8px;
    border-top: 1px solid #858585;
    border-bottom: 1px solid #888;
    background: #d8d8d8;
}

.splitter-h button {
    display: flex;
    align-items: center;
    justify-content: center;
    width: 24px;
    border: 1px solid #888;
    border-width: 0 1px;
    background: #bbb;
}

/* Tabs */
.tabs {
    display: flex;
    align-items: flex-end;
    gap: 1px;
    height: 33px;
    padding: 0 6px 8px;
    background: linear-gradient(#ccc 24px, #777 24px 25px, #e9e9e9 25px);
}

.tab {
    display: flex;
    align-items: center;
    height: 22px;
    padding: 0 21px 0 11px;
    border: 1px solid #777;
    background: linear-gradient(#e6e6e6 50%, #dadada 50%);
    color: #555;
    font-size: 15px;
    font-weight: 700;
    line-height: 18px;
    white-space: nowrap;
}

.tab.on {
    border-bottom-color: #e9e9e9;
    background: linear-gradient(#f6f6f6, #e9e9e9);
    color: #000;
}

/* Inspector */
.inspector {
    display: flex;
    flex: 1;
    flex-direction: column;
    border: solid #1b2233;
    border-width: 0 2px 0 3px;
    background: #e9e9e9;
}

.inspector-bar {
    display: flex;
    align-items: flex-end;
    gap: 1px;
    height: 27px;
    padding-right: 2px;
    border-bottom: 3px solid #2b3850;
    background: #b1b1b1;
}

.inspector-bar h1 {
    flex: 1;
    padding: 0 5px;
    color: #fff;
    font-size: 14px;
    font-weight: 500;
    line-height: 24px;
}

.inspector-bar .tab {
    gap: 6px;
    height: 21px;
    padding: 0 21px 0 2px;
    border-bottom: 0;
}

.inspector-bar .tab.on {
    height: 24px;
    margin-bottom: -3px;
    padding-bottom: 3px;
    border-top: 2px solid #2b3850;
}

.inspector-bar .tab:nth-of-type(4) {
    padding: 0 22px 0 11px;
}

.inspector-bar .window-buttons {
    gap: 1px;
    height: 21px;
    margin-left: 14px;
    color: #fff;
}

.inspector-tabs {
    height: 25px;
    padding-bottom: 0;
}

.inspector-body {
    display: flex;
    flex: 1;
}

.nav {
    flex: none;
    width: 173px;
    margin: 0;
    padding: 34px 0 0 18px;
    background: repeating-linear-gradient(#efefef 0 18px, #e7e7e7 18px 19px) 2px 34px no-repeat;
    list-style: none;
    font-size: 12px;
}

.nav li {
    height: 19px;
}

.nav a {
    display: inline-block;
    height: 18px;
    padding: 0 2px 0 1px;
    color: #000;
    line-height: 19px;
    text-decoration: none;
}

.nav .on {
    background: #c3cdd9;
}

.splitter-v {
    display: flex;
    flex: none;
    flex-direction: column;
    gap: 10px;
    width: 8px;
    margin-top: 3px;
    padding-top: 124px;
    border: solid #888;
    border-width: 1px 1px 0;
    background: #d8d8d8;
}

.splitter-v button {
    display: flex;
    align-items: center;
    justify-content: center;
    height: 24px;
    border: 1px solid #888;
    border-width: 1px 0;
    background: #bbb;
}

.content {
    flex: 1;
    min-width: 0;
    padding: 11px 12px 0 11px;
}

.section-title {
    display: flex;
    align-items: flex-end;
    gap: 7px;
    font-size: 14px;
    font-weight: 400;
    line-height: 20px;
}

.section-title::after {
    flex: 1;
    height: 1px;
    margin-bottom: 3px;
    background: #000;
    content: "";
}

.cards {
    display: grid;
    grid-template-columns: minmax(0, 1fr) minmax(0, 1fr);
    align-items: start;
    gap: 6px;
    padding: 8px 13px 0 1px;
}

.card {
    display: flex;
    flex-direction: column;
    gap: 6px;
    padding: 0 11px 37px 0;
    border: 1px solid #b1b1b1;
    background: #ccc;
}

.settings {
    padding-bottom: 33px;
}

.card h3 {
    height: 23px;
    padding: 0 14px;
    font-size: 15px;
    line-height: 24px;
}

.row {
    display: flex;
    height: 18px;
}

.space {
    margin-bottom: 24px;
}

.row label {
    flex: none;
    width: 157px;
    margin-right: 10px;
    font-size: 12px;
    line-height: 19px;
    text-align: right;
    white-space: nowrap;
}

.settings label {
    width: 145px;
}

.row i {
    font-family: "Noto Sans CJK TC", sans-serif;
    font-style: normal;
}

.field {
    display: flex;
    flex: 1;
    min-width: 0;
    border: 1px solid #858585;
    background: #fff;
}

.off {
    background: #e1e1e1;
}

.short {
    flex: none;
    width: 114px;
}

.field input, .field select {
    flex: 1;
    min-width: 0;
    height: 16px;
    padding: 0 3px;
    line-height: 16px;
}

.field select {
    appearance: none;
    color: #000;
    font-size: 13px;
    opacity: 1;
}

.field button, .drop, .spin {
    display: flex;
    align-items: center;
    justify-content: center;
    flex: none;
    width: 17px;
    border-left: 1px solid #858585;
    background: linear-gradient(#f5f5f5, #e2e2e2 50%, #d0d0d0 55%, #ddd);
    font-weight: 700;
}

.drop, .spin {
    background: #ececec;
    color: #808080;
}

.spin {
    flex-direction: column;
    gap: 2px;
}

.goto {
    width: 24px;
    padding: 2px 0 0 6px;
}

/* Watermark */
.watermark {
    position: absolute;
    top: 498px;
    left: 488px;
    color: rgba(255, 255, 255, 0.45);
    text-shadow: 0 0 2px rgba(110, 110, 110, 0.3);
    transform: rotate(-30deg);
    transform-origin: 0 0;
    white-space: nowrap;
    pointer-events: none;
}

.mark-name {
    display: flex;
    gap: 32px;
    margin-top: -16px;
    padding-left: 7px;
    font-size: 42px;
    font-weight: 500;
    line-height: 40px;
}

.mark-url {
    font-family: "Liberation Sans", sans-serif;
    font-size: 27px;
    line-height: 28px;
}
```
